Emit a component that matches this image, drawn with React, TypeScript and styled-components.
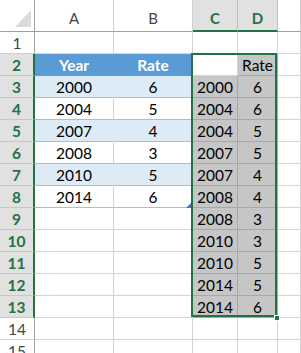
import React from "react";
import styled, { createGlobalStyle, css } from "styled-components";

const GREEN = "#217346";
const GRID = "#d4d4d4";

const GlobalStyle = createGlobalStyle`
	html, body {
		margin: 0;
		background: #fff;
		overflow: hidden;
	}
	body {
		font-family: Lato, "Liberation Sans", sans-serif;
		font-size: 15.5px;
		color: #000;
	}
`;

type Variant = "plain" | "tableHead" | "band" | "tableRow" | "shade" | "active";

type Row = { n: number; a?: string; b?: string; c?: string; d?: string };

const rows: Row[] = [
	{ n: 1 },
	{ n: 2, a: "Year", b: "Rate", d: "Rate" },
	{ n: 3, a: "2000", b: "6", c: "2000", d: "6" },
	{ n: 4, a: "2004", b: "5", c: "2004", d: "6" },
	{ n: 5, a: "2007", b: "4", c: "2004", d: "5" },
	{ n: 6, a: "2008", b: "3", c: "2007", d: "5" },
	{ n: 7, a: "2010", b: "5", c: "2007", d: "4" },
	{ n: 8, a: "2014", b: "6", c: "2008", d: "4" },
	{ n: 9, c: "2008", d: "3" },
	{ n: 10, c: "2010", d: "3" },
	{ n: 11, c: "2010", d: "5" },
	{ n: 12, c: "2014", d: "5" },
	{ n: 13, c: "2014", d: "6" },
	{ n: 14 },
	{ n: 15 },
];

const tableVariant = (n: number): Variant => {
	if (n === 2) return "tableHead";
	if (n >= 3 && n <= 8) return n % 2 === 1 ? "band" : "tableRow";
	return "plain";
};

const selVariant = (n: number, col: "c" | "d"): Variant => {
	if (n === 2 && col === "c") return "active";
	if (n >= 2 && n <= 13) return "shade";
	return "plain";
};

const App = () => {
	return (
		<>
			<GlobalStyle />
			<Sheet>
				<Corner>
					<CornerMark />
				</Corner>
				<ColHeader>A</ColHeader>
				<ColHeader>B</ColHeader>
				<ColHeader $selected>C</ColHeader>
				<ColHeader $selected>D</ColHeader>
				<ColHeader />

				{rows.map((r) => {
					const sel = r.n >= 2 && r.n <= 13;
					const tv = tableVariant(r.n);
					return (
						<React.Fragment key={r.n}>
							<RowHeader $selected={sel}>{r.n}</RowHeader>
							<Cell $variant={tv}>{r.a}</Cell>
							<Cell $variant={tv}>
								{r.b}
								{r.n === 8 && <ResizeHandle />}
							</Cell>
							<Cell $variant={selVariant(r.n, "c")}>{r.c}</Cell>
							<Cell $variant={selVariant(r.n, "d")}>{r.d}</Cell>
							<Cell $variant="plain" />
						</React.Fragment>
					);
				})}

				<Selection>
					<FillHandle />
				</Selection>
			</Sheet>
		</>
	);
};

const Sheet = styled.div`
	position: relative;
	display: grid;
	grid-template-columns: 35px 79px 79px 45px 40px 1fr;
	grid-template-rows: 32px repeat(15, 22px);
	width: 301px;
`;

const Corner = styled.div`
	position: relative;
	border-right: 1px solid #a0a0a0;
	border-bottom: 1px solid #a0a0a0;
	box-sizing: border-box;
	background: #fff;
`;

const CornerMark = styled.div`
	position: absolute;
	right: 3px;
	bottom: 4px;
	width: 0;
	height: 0;
	border-left: 16px solid transparent;
	border-bottom: 17px solid #dcdcdc;
`;

const ColHeader = styled.div<{ $selected?: boolean }>`
	display: flex;
	align-items: flex-end;
	justify-content: center;
	padding-bottom: 4px;
	box-sizing: border-box;
	background: #fff;
	color: #444;
	border-right: 1px solid #d0d0d0;
	border-bottom: 1px solid #a0a0a0;
	font-size: 15px;

	${(p) =>
		p.$selected &&
		css`
			background: #e1e1e1;
			color: ${GREEN};
			font-weight: 700;
			border-right-color: #c0c0c0;
			border-bottom: 2px solid ${GREEN};
			padding-bottom: 3px;
		`}
`;

const RowHeader = styled.div<{ $selected?: boolean }>`
	display: flex;
	align-items: center;
	justify-content: center;
	padding-top: 1px;
	box-sizing: border-box;
	background: #fff;
	color: #444;
	border-right: 1px solid #a0a0a0;
	border-bottom: 1px solid #d0d0d0;

	${(p) =>
		p.$selected &&
		css`
			background: #e1e1e1;
			color: ${GREEN};
			font-weight: 700;
			border-right: 2px solid ${GREEN};
			border-bottom-color: #c6c6c6;
		`}
`;

const variantStyles: Record<Variant, ReturnType<typeof css>> = {
	plain: css`
		background: #fff;
		border-color: ${GRID};
	`,
	active: css`
		background: #fff;
		border-color: ${GRID};
	`,
	tableHead: css`
		background: #5b9bd5;
		border-color: #5b9bd5;
		color: #fff;
		font-weight: 700;
	`,
	band: css`
		background: #ddebf7;
		border-right-color: #ddebf7;
		border-bottom-color: #9bc2e6;
	`,
	tableRow: css`
		background: #fff;
		border-right-color: ${GRID};
		border-bottom-color: #9bc2e6;
	`,
	shade: css`
		background: #c6c6c6;
		border-color: #a8a8a8;
	`,
};

const Cell = styled.div<{ $variant: Variant }>`
	position: relative;
	display: flex;
	align-items: center;
	justify-content: center;
	padding-top: 1px;
	box-sizing: border-box;
	border-right: 1px solid;
	border-bottom: 1px solid;
	${(p) => variantStyles[p.$variant]}
`;

const ResizeHandle = styled.div`
	position: absolute;
	right: 1px;
	bottom: -1px;
	width: 0;
	height: 0;
	border-left: 5px solid transparent;
	border-bottom: 5px solid #4f6fc4;
`;

/* overlay spanning C2:D13; absolute so it stays out of auto-placement */
const Selection = styled.div`
	position: absolute;
	grid-column: 4 / 6;
	grid-row: 3 / 15;
	top: -1px;
	left: -2px;
	right: 1px;
	bottom: 1px;
	border: 2px solid ${GREEN};
	pointer-events: none;
`;

const FillHandle = styled.div`
	position: absolute;
	right: -5px;
	bottom: -6px;
	width: 4px;
	height: 4px;
	background: ${GREEN};
	border: 1px solid #fff;
`;

export default App;
